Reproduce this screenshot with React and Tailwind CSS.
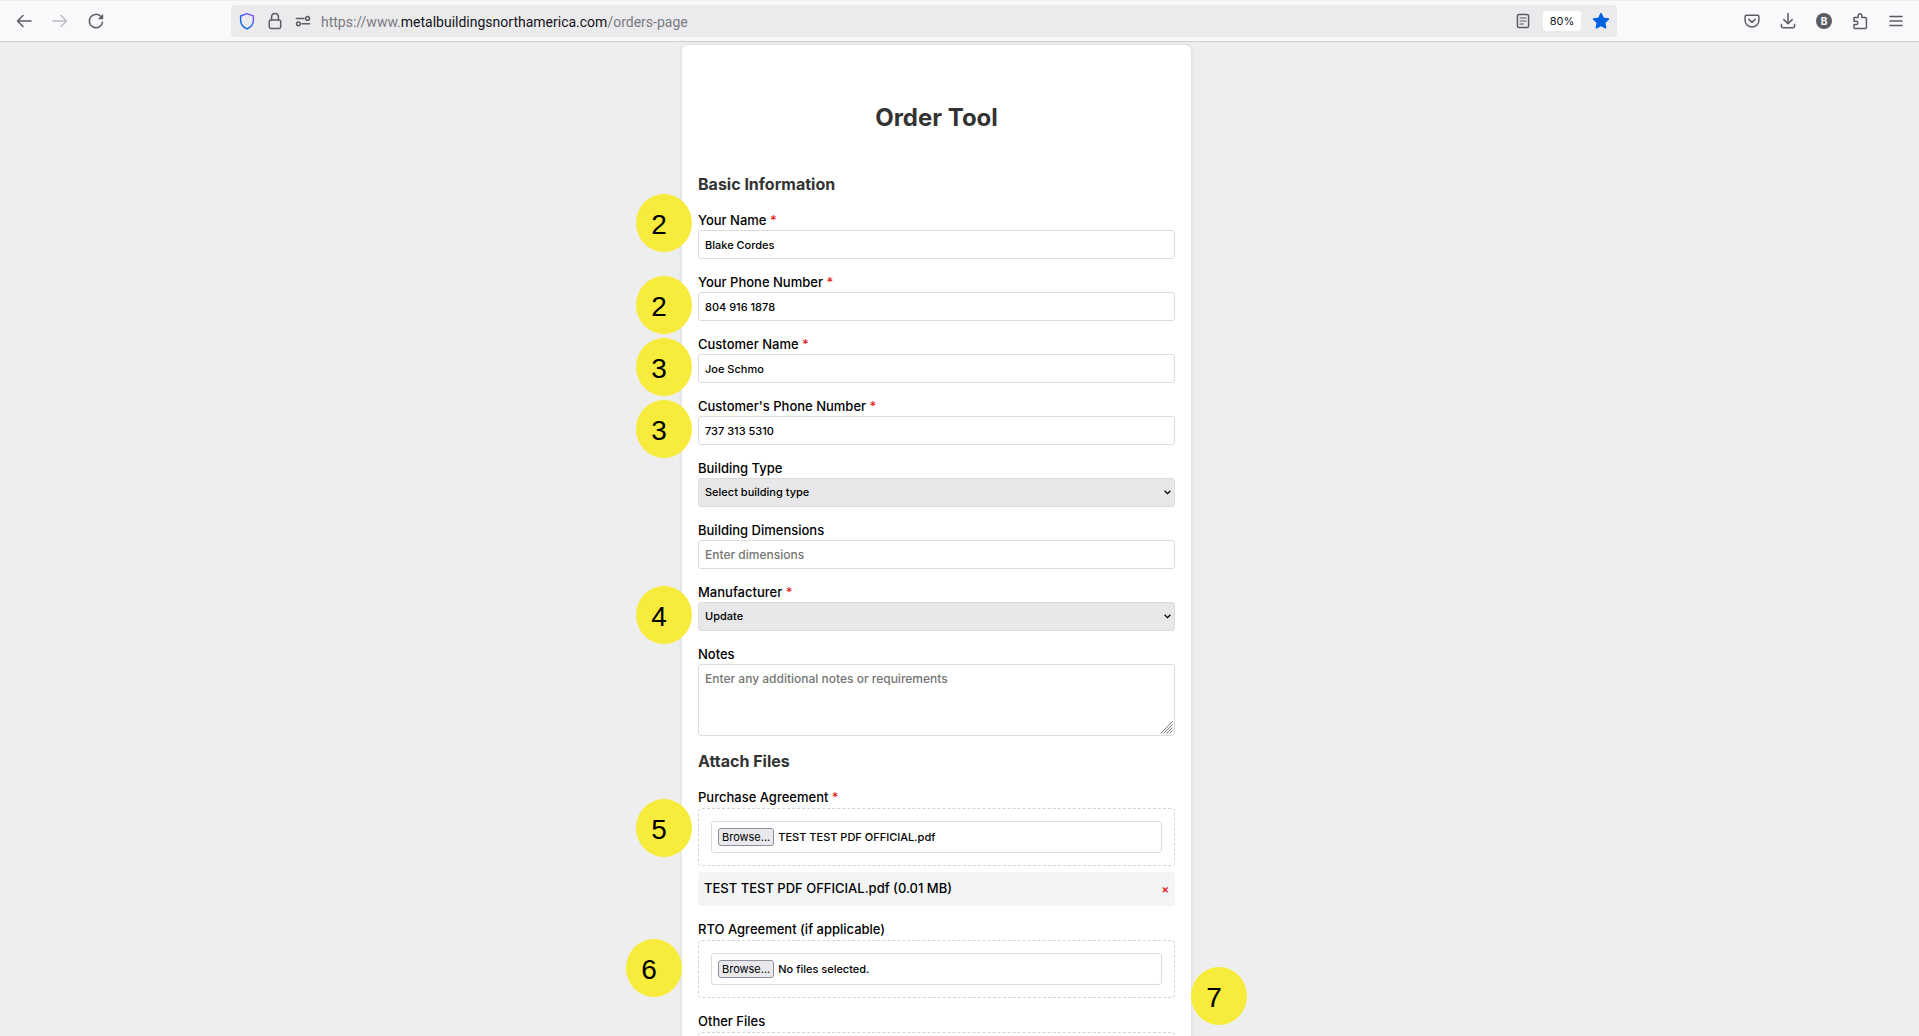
import React from "react";

const Svg = ({ size = 20, className = "", children, ...rest }) => (
  <svg width={size} height={size} viewBox="0 0 20 20" fill="none" stroke="currentColor" strokeWidth="1.5" strokeLinecap="round" strokeLinejoin="round" className={"shrink-0 " + className} aria-hidden="true" {...rest}>
    {children}
  </svg>
);

function IconButton({ label, className = "", children }) {
  return (
    <button type="button" aria-label={label} className={"flex size-5 items-center justify-center " + className}>
      {children}
    </button>
  );
}

function Toolbar() {
  return (
    <header className="flex h-[42px] shrink-0 items-center border-t border-b border-t-[#f0f0f2] border-b-[#cccccf] bg-[#f9f9fb] pr-[13px] pl-[14px] text-[#5b5b66]">
      <nav className="flex gap-4">
        <IconButton label="Back"><Svg><path d="M17 10H3.5M9 4.5L3.5 10L9 15.5" /></Svg></IconButton>
        <IconButton label="Forward" className="text-[#bcbcc2]"><Svg><path d="M3 10H16.5M11 4.5L16.5 10L11 15.5" /></Svg></IconButton>
        <IconButton label="Reload"><Svg><path d="M16.6 11.2A6.7 6.7 0 1 1 14.6 5.2" /><path d="M17.2 2.8V8.2H11.8Z" fill="currentColor" stroke="none" /></Svg></IconButton>
      </nav>
      <div className="mr-auto ml-[125px] flex h-8 w-[1386px] min-w-0 shrink items-center rounded bg-[#ebebed] px-[6px]">
        <IconButton label="Tracking protection">
          <svg width="20" height="20" viewBox="0 0 20 20" fill="none" aria-hidden="true">
            <defs><linearGradient id="shield" x1="16" y1="2" x2="6" y2="14" gradientUnits="userSpaceOnUse"><stop stopColor="#9059ff" /><stop offset="1" stopColor="#0060df" /></linearGradient></defs>
            <path d="M10 2.6L16.4 5V9C16.4 12.8 13.8 16.2 10 17.8C6.2 16.2 3.6 12.8 3.6 9V5Z" stroke="url(#shield)" strokeWidth="1.4" strokeLinejoin="round" />
          </svg>
        </IconButton>
        <IconButton label="Connection" className="ml-2"><Svg><rect x="4.3" y="9" width="11.4" height="8.4" rx="1.6" /><path d="M6.6 9V5.8A3.4 3.4 0 0 1 13.4 5.8V9" /></Svg></IconButton>
        <IconButton label="Permissions" className="ml-2"><Svg><path d="M3.4 7.4H11M9 12.8H16.6" /><circle cx="14.6" cy="7.4" r="1.9" /><circle cx="5.4" cy="12.8" r="1.9" /></Svg></IconButton>
        <div role="textbox" aria-label="Address" contentEditable suppressContentEditableWarning className="ml-2 truncate pt-px font-[Roboto,sans-serif] text-[14px] leading-5 text-[#7a7a80]">https://www.<span className="text-[#15141a]">metalbuildingsnorthamerica.com</span>/orders-page</div>
        <div className="ml-auto flex items-center gap-[10px]">
          <IconButton label="Reader view"><Svg><rect x="4.4" y="3.5" width="11.2" height="13" rx="1.6" /><path d="M7 7H13M7 10H13M7 13H10.5" strokeWidth="1.2" /></Svg></IconButton>
          <button type="button" className="h-5 w-[38px] rounded-sm bg-white text-[11px] text-[#15141a]">80%</button>
          <IconButton label="Bookmark" className="text-[#0061e0]"><Svg><path d="M10 2.6L12.3 7.3L17.5 8L13.7 11.6L14.6 16.9L10 14.4L5.4 16.9L6.3 11.6L2.5 8L7.7 7.3Z" fill="currentColor" /></Svg></IconButton>
        </div>
      </div>
      <div className="flex gap-4">
        <IconButton label="Pocket"><Svg><path d="M4.5 4.2H15.5A1.4 1.4 0 0 1 16.9 5.6V9.2A6.9 6.9 0 0 1 3.1 9.2V5.6A1.4 1.4 0 0 1 4.5 4.2ZM6.8 8.4L10 11.4L13.2 8.4" /></Svg></IconButton>
        <IconButton label="Downloads"><Svg><path d="M10 2.5V12.5M5.8 8.6L10 12.8L14.2 8.6M3.4 13.4V15A1.8 1.8 0 0 0 5.2 16.8H14.8A1.8 1.8 0 0 0 16.6 15V13.4" /></Svg></IconButton>
        <IconButton label="Account"><span className="flex size-4 items-center justify-center rounded-full bg-[#5b5b66] text-[10px] font-bold text-white">B</span></IconButton>
        <IconButton label="Extensions"><Svg><path d="M4 6.6H8.2V4.6A1.8 1.8 0 0 1 11.8 4.6V6.6H15.4A1 1 0 0 1 16.4 7.6V16.4A1 1 0 0 1 15.4 17.4H5A1 1 0 0 1 4 16.4V13.6H6.2A1.7 1.7 0 0 0 6.2 10.2H4Z" /></Svg></IconButton>
        <IconButton label="Menu"><Svg><path d="M4 5.5H16M4 10H16M4 14.5H16" /></Svg></IconButton>
      </div>
    </header>
  );
}

function Badge({ n, className }) {
  return (
    <span className={"absolute z-10 flex h-[58px] w-14 items-center justify-center rounded-[50%] bg-[#f7eb3b] pt-1 pr-[10px] font-['Liberation_Sans',sans-serif] text-[28px] leading-8 font-normal text-black " + className}>
      {n}
    </span>
  );
}

const box = "block w-full rounded-[3px] border border-[#dcdcdc] px-[6px] text-[11px] font-medium text-black placeholder:text-[12px] placeholder:text-[#757575] placeholder:opacity-100 ";

function Field({ id, label, required, badge, badgeClass, children }) {
  return (
    <div className="relative mb-[13px]">
      <label htmlFor={id} className="block text-[13px] leading-5 font-medium text-black">
        {label}
        {required && <span className="text-[#e02424]"> *</span>}
      </label>
      {children}
      {badge && <Badge n={badge} className={badgeClass} />}
    </div>
  );
}

const TextInput = ({ id, ...rest }) => <input id={id} type="text" className={box + "h-[29px] bg-white"} {...rest} />;

function Select({ id, options }) {
  return (
    <div className="relative">
      <select id={id} className={box + "h-[29px] appearance-none bg-[#e8e8ea]"}>
        {options.map((o) => <option key={o}>{o}</option>)}
      </select>
      <svg width="7" height="5" viewBox="0 0 7 5" fill="none" stroke="#000" strokeWidth="1.3" className="pointer-events-none absolute top-3 right-1" aria-hidden="true"><path d="M0.6 0.8L3.5 3.7L6.4 0.8" /></svg>
    </div>
  );
}

const dropZone = "mt-px h-[58px] rounded border border-dashed border-[#d4d4d4] px-3 py-3 ";

function FilePicker({ id, text }) {
  return (
    <div className={dropZone}>
      <label className={box + "flex h-8 items-center gap-1 bg-white"}>
        <input id={id} type="file" className="sr-only" />
        <span className="rounded-[3px] border border-[#8f8f9d] bg-[#e9e9ed] px-[3px] leading-4 font-normal">Browse...</span>
        <span>{text}</span>
      </label>
    </div>
  );
}

export default function App() {
  return (
    <div className="flex h-screen flex-col overflow-hidden bg-[#eeeeee] font-[Inter,sans-serif]">
      <Toolbar />
      <main className="min-h-0 flex-1 overflow-hidden pt-[3px] pr-[46px]">
        <form className="mx-auto w-full max-w-[509px] rounded-md bg-white px-4 pb-10 shadow-[0_0_4px_rgba(0,0,0,0.1)]">
          <h1 className="pt-[57px] text-center text-[24px] leading-8 font-bold text-[#333]">Order Tool</h1>
          <h2 className="mt-[38px] mb-[14px] text-[16px] leading-6 font-bold text-[#333]">Basic Information</h2>
          <Field id="name" label="Your Name" required badge="2" badgeClass="-top-4 -left-[62px]"><TextInput id="name" defaultValue="Blake Cordes" /></Field>
          <Field id="phone" label="Your Phone Number" required badge="2" badgeClass="top-1 -left-[62px]"><TextInput id="phone" defaultValue="804 916 1878" /></Field>
          <Field id="cname" label="Customer Name" required badge="3" badgeClass="top-1 -left-[62px]"><TextInput id="cname" defaultValue="Joe Schmo" /></Field>
          <Field id="cphone" label="Customer's Phone Number" required badge="3" badgeClass="top-1 -left-[62px]"><TextInput id="cphone" defaultValue="737 313 5310" /></Field>
          <Field id="type" label="Building Type"><Select id="type" options={["Select building type"]} /></Field>
          <Field id="dims" label="Building Dimensions"><TextInput id="dims" placeholder="Enter dimensions" /></Field>
          <Field id="maker" label="Manufacturer" required badge="4" badgeClass="top-1 -left-[62px]"><Select id="maker" options={["Update"]} /></Field>
          <Field id="notes" label="Notes">
            <div className="relative">
              <textarea id="notes" placeholder="Enter any additional notes or requirements" className={box + "h-[72px] resize-none bg-white py-[6px] leading-4"} />
              <svg width="13" height="13" viewBox="0 0 13 13" stroke="#777" className="pointer-events-none absolute right-[2px] bottom-[2px]" aria-hidden="true"><path d="M0.5 12.5L12.5 0.5M3.5 12.5L12.5 3.5M6.5 12.5L12.5 6.5M9.5 12.5L12.5 9.5" /></svg>
            </div>
          </Field>
          <h2 className="mb-[14px] text-[16px] leading-6 font-bold text-[#333]">Attach Files</h2>
          <Field id="purchase" label="Purchase Agreement" required badge="5" badgeClass="top-3 -left-[62px]">
            <FilePicker id="purchase" text="TEST TEST PDF OFFICIAL.pdf" />
            <div className="mt-[6px] flex h-[34px] items-center justify-between rounded-[3px] bg-[#f3f4f6] px-[6px] text-[13px] font-medium text-black">
              <span>TEST TEST PDF OFFICIAL.pdf (0.01 MB)</span>
              <button type="button" aria-label="Remove file" className="text-[11px] font-bold text-[#e02424]">×</button>
            </div>
          </Field>
          <Field id="rto" label="RTO Agreement (if applicable)" badge="6" badgeClass="top-5 -left-[72px]">
            <FilePicker id="rto" text="No files selected." />
            <Badge n="7" className="top-12 -right-[72px]" />
          </Field>
          <Field id="other" label="Other Files">
            <div className={dropZone}><input id="other" type="file" className="sr-only" /></div>
          </Field>
        </form>
      </main>
    </div>
  );
}
